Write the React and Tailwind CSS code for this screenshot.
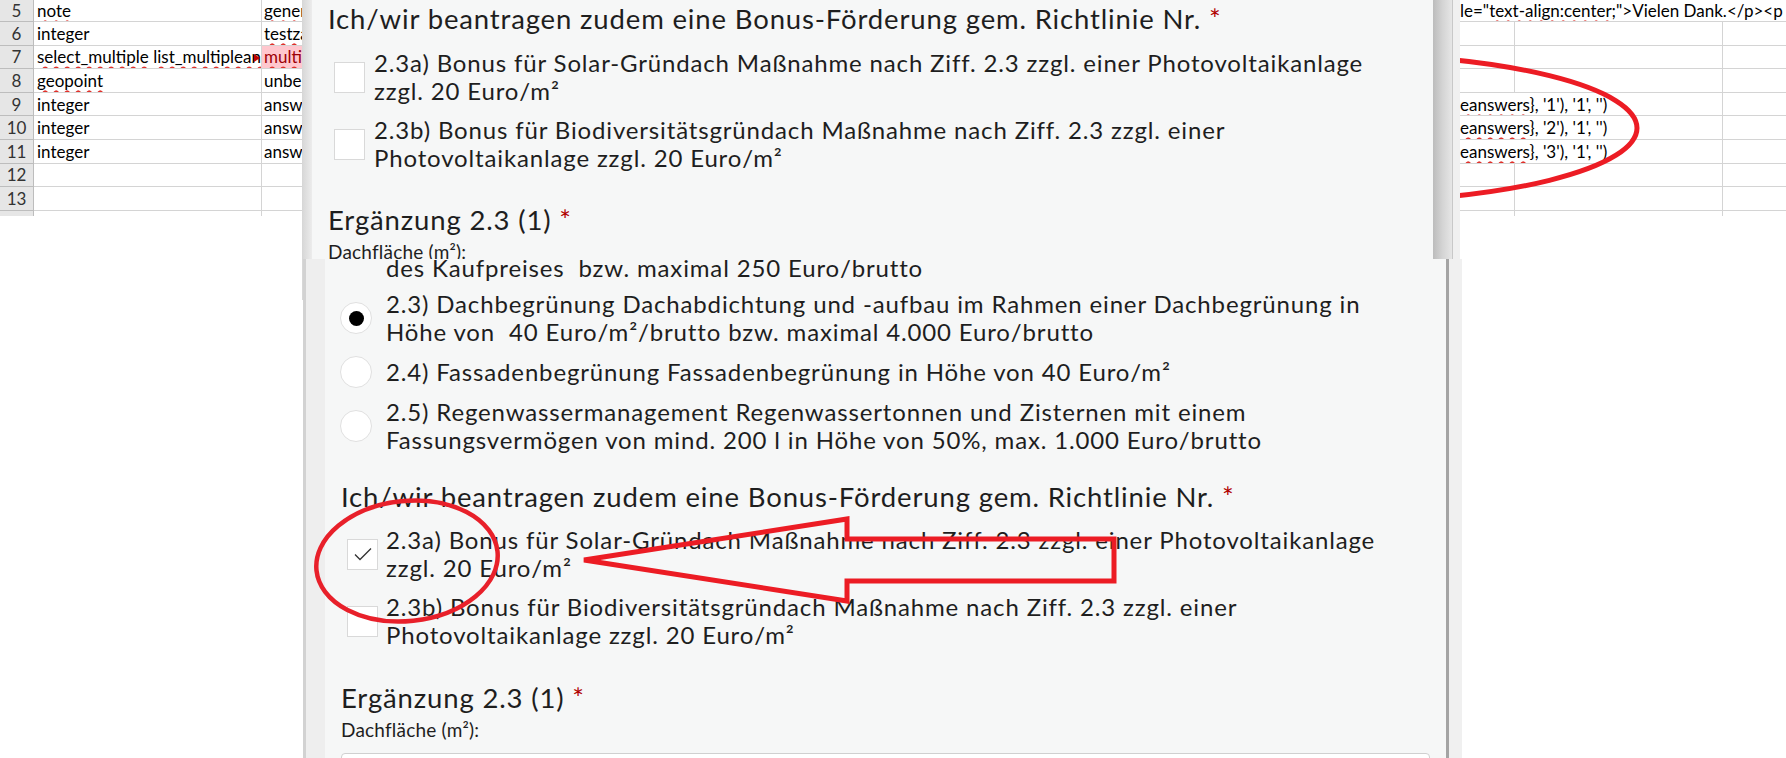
import React from 'react';

const W = ({ children }) => (
  <span className="underline decoration-wavy decoration-[#e0302a] decoration-[1.5px] underline-offset-[3px]">{children}</span>
);

function Cell({ w, cls = '', children }) {
  return (
    <div className={`${w} shrink-0 h-full flex items-center overflow-hidden whitespace-nowrap border-b border-[#d4d4d4] ${cls}`}>
      {children}
    </div>
  );
}

function Row({ n, h, a, b, pink, right, last }) {
  return (
    <div className={`flex ${h}`}>
      <div className={`w-[34px] shrink-0 flex items-center justify-center bg-[#e6e6e6] border-r border-[#bdbdbd] text-[#333] ${last ? '' : 'border-b'}`}>{n}</div>
      <Cell w="w-[228px]" cls={`border-r px-[3px] relative ${last ? 'border-b-0' : ''}`}>
        {a}
        {n === 7 && (
          <svg className="absolute right-[1px] top-[8px]" width="6" height="8" viewBox="0 0 6 8">
            <path d="M0 0 L6 4 L0 8 Z" fill="#c00000" />
          </svg>
        )}
      </Cell>
      <Cell w="w-[1198px]" cls={`px-[2px] ${pink ? 'bg-[#ffc7ce] text-[#9c0006]' : ''} ${last ? 'border-b-0' : ''}`}>{b}</Cell>
      {right ? right : (
        <>
          <Cell w="w-[55px]" cls={`border-r ${last ? 'border-b-0' : ''}`} />
          <Cell w="w-[208px]" cls={`border-r ${last ? 'border-b-0' : ''}`} />
          <Cell w="w-[63px]" cls={last ? 'border-b-0' : ''} />
        </>
      )}
    </div>
  );
}

const formula = (d) => (
  <>
    <Cell w="w-[263px]" cls="border-r">
      <span><W>eanswers</W>{`}, '${d}'), '1', '')`}</span>
    </Cell>
    <Cell w="w-[63px]" />
  </>
);

function Sheet() {
  return (
    <div className="font-['Lato',sans-serif] text-[17px] text-black leading-none">
      <Row n={5} h="h-[22px]" a={<W>note</W>} b={<W>generated_note</W>}
        right={
          <Cell w="w-[326px]">
            <span>le="<W>text-align:center</W>;"&gt;Vielen Dank.&lt;/p&gt;&lt;p style</span>
          </Cell>
        } />
      <Row n={6} h="h-[23.6px]" a="integer" b={<W>testzahl</W>} />
      <Row n={7} h="h-[23.6px]" a={<span><W>select_multiple</W> <W>list_multipleanswers</W></span>} b={<W>multipleanswers</W>} pink />
      <Row n={8} h="h-[23.6px]" a={<W>geopoint</W>} b="unbekannt" />
      <Row n={9} h="h-[23.6px]" a="integer" b="answer1" right={formula(1)} />
      <Row n={10} h="h-[23.6px]" a="integer" b="answer2" right={formula(2)} />
      <Row n={11} h="h-[23.6px]" a="integer" b="answer3" right={formula(3)} />
      <Row n={12} h="h-[23.6px]" />
      <Row n={13} h="h-[23.6px]" />
      <Row n="" h="h-[5px]" last />
    </div>
  );
}

const Star = () => <span className="text-[#b00000]"> *</span>;

function Check({ checked }) {
  return (
    <div className="w-[31px] h-[31px] shrink-0 bg-white border border-[#d9d9d9] flex items-center justify-center">
      {checked && (
        <svg width="22" height="16" viewBox="0 0 22 16">
          <path d="M3 8.5 L8 13.5 L19 2.5" fill="none" stroke="#333" strokeWidth="1.3" />
        </svg>
      )}
    </div>
  );
}

function Radio({ on }) {
  return (
    <div className="w-[32px] h-[32px] shrink-0 rounded-full bg-white border border-[#e0e0e0] flex items-center justify-center">
      {on && <div className="w-[15px] h-[15px] rounded-full bg-black" />}
    </div>
  );
}

function Bonus() {
  return (
    <>
      <div className="text-[27.5px] tracking-[0.85px] leading-[32px] whitespace-nowrap">
        Ich/wir beantragen zudem eine Bonus-Förderung gem. Richtlinie Nr.<Star />
      </div>
      <div className="mt-[14px] ml-[6px] flex flex-col gap-[11px]">
        {[
          ['2.3a) Bonus für Solar-Gründach Maßnahme nach Ziff. 2.3 zzgl. einer Photovoltaikanlage', 'zzgl. 20 Euro/m²'],
          ['2.3b) Bonus für Biodiversitätsgründach Maßnahme nach Ziff. 2.3 zzgl. einer', 'Photovoltaikanlage zzgl. 20 Euro/m²'],
        ].map(([l1, l2], i) => (
          <div key={i} className="flex items-center gap-[9px]">
            <Check checked={false} />
            <div className="leading-[28px] whitespace-nowrap">{l1}<br />{l2}</div>
          </div>
        ))}
      </div>
      <div className="mt-[32px] text-[27.5px] tracking-[0.85px] leading-[32px]">Ergänzung 2.3 (1)<Star /></div>
      <div className="mt-[5px] text-[19px] tracking-[0.2px] leading-[22px]">Dachfläche (m²):</div>
    </>
  );
}

export default function App() {
  return (
    <div className="relative w-[1786px] h-[758px] overflow-hidden bg-white">
      <Sheet />

      <svg className="absolute inset-0 pointer-events-none" width="1786" height="758">
        <ellipse cx="1338" cy="128" rx="299" ry="74" fill="none" stroke="#ec1c24" strokeWidth="5" />
      </svg>

      {/* upper form window */}
      <div className="absolute left-[302px] top-0 w-[1158px] h-[300px] flex bg-[#f6f7f7] font-['Lato',sans-serif] text-[24px] tracking-[0.85px] text-[#1e1e1e]">
        <div className="w-[10px] bg-gradient-to-r from-[#d6d6d6] to-[#ececec]" />
        <div className="flex-1 pl-[16px] pt-[3px] overflow-hidden">
          <Bonus />
        </div>
        <div className="w-[19px] bg-gradient-to-r from-[#bcbcbc] via-[#d4d4d4] to-[#e6e6e6]" />
        <div className="w-[8px] bg-[#f0f0f0] border-l border-[#c8c8c8]" />
      </div>

      {/* lower form window */}
      <div className="absolute left-[303px] top-[259px] w-[1159px] h-[499px] flex bg-[#f6f7f7] font-['Lato',sans-serif] text-[24px] tracking-[0.85px] text-[#1e1e1e]">
        <div className="w-[22px] bg-[#eeeeee] border-l-[3px] border-[#d2d2d2]" />
        <div className="flex-1 pl-[16px] overflow-hidden">
          <div className="-mt-[5px] pl-[45px] leading-[28px] whitespace-pre">des Kaufpreises  bzw. maximal 250 Euro/brutto</div>
          <div className="mt-[8px] -ml-[1px] flex flex-col gap-[10px]">
            {[
              [true, '2.3) Dachbegrünung Dachabdichtung und -aufbau im Rahmen einer Dachbegrünung in', 'Höhe von  40 Euro/m²/brutto bzw. maximal 4.000 Euro/brutto'],
              [false, '2.4) Fassadenbegrünung Fassadenbegrünung in Höhe von 40 Euro/m²', null],
              [false, '2.5) Regenwassermanagement Regenwassertonnen und Zisternen mit einem', 'Fassungsvermögen von mind. 200 l in Höhe von 50%, max. 1.000 Euro/brutto'],
            ].map(([on, l1, l2], i) => (
              <div key={i} className="flex items-center gap-[14px]">
                <Radio on={on} />
                <div className="leading-[28px] whitespace-pre">{l1}{l2 && <><br />{l2}</>}</div>
              </div>
            ))}
          </div>
          <div className="mt-[27px] text-[27.5px] tracking-[0.85px] leading-[32px] whitespace-nowrap">
            Ich/wir beantragen zudem eine Bonus-Förderung gem. Richtlinie Nr.<Star />
          </div>
          <div className="mt-[13px] ml-[6px] flex flex-col gap-[11px]">
            {[
              [true, '2.3a) Bonus für Solar-Gründach Maßnahme nach Ziff. 2.3 zzgl. einer Photovoltaikanlage', 'zzgl. 20 Euro/m²'],
              [false, '2.3b) Bonus für Biodiversitätsgründach Maßnahme nach Ziff. 2.3 zzgl. einer', 'Photovoltaikanlage zzgl. 20 Euro/m²'],
            ].map(([c, l1, l2], i) => (
              <div key={i} className="flex items-center gap-[8px]">
                <Check checked={c} />
                <div className="leading-[28px] whitespace-nowrap">{l1}<br />{l2}</div>
              </div>
            ))}
          </div>
          <div className="mt-[33px] text-[27.5px] tracking-[0.85px] leading-[32px]">Ergänzung 2.3 (1)<Star /></div>
          <div className="mt-[5px] text-[19px] tracking-[0.2px] leading-[22px]">Dachfläche (m²):</div>
          <div className="mt-[12px] mr-[16px] h-[44px] rounded-[4px] bg-white border border-[#d0d0d0]" />
        </div>
        <div className="w-[3px] bg-[#a4a4a4]" />
        <div className="w-[13px] bg-[#f0f0f0]" />
      </div>

      <svg className="absolute inset-0 pointer-events-none" width="1786" height="758">
        <ellipse cx="407" cy="561" rx="91" ry="60" transform="rotate(-6 407 561)" fill="none" stroke="#e8202a" strokeWidth="4.5" />
        <path d="M584 560 L847 519 L847 539 L1114 539 L1114 581 L847 581 L847 601 Z" fill="none" stroke="#ec1c24" strokeWidth="5" />
      </svg>
    </div>
  );
}
